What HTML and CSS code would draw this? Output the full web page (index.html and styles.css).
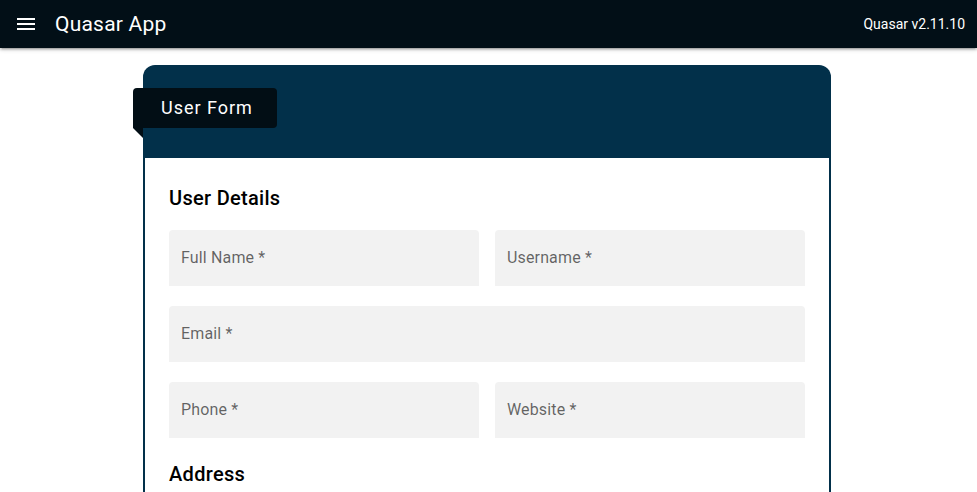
FILE: index.html
```html
<!DOCTYPE html>
<html>
<head>
<meta charset="utf-8">
<link rel="stylesheet" href="styles.css">
</head>
<body>
<header class="toolbar">
  <button class="menu-btn" aria-label="Menu">
    <svg width="24" height="24" viewBox="0 0 24 24"><path fill="#fff" d="M3 18h18v-2H3v2zm0-5h18v-2H3v2zm0-7v2h18V6H3z"/></svg>
  </button>
  <div class="title">Quasar App</div>
  <div class="version">Quasar v2.11.10</div>
</header>
<main class="page">
  <section class="card">
    <div class="card-head">
      <div class="ribbon">User Form</div>
    </div>
    <div class="card-body">
      <h2 class="section-title">User Details</h2>
      <div class="row">
        <div class="field"><span class="label">Full Name *</span></div>
        <div class="field"><span class="label">Username *</span></div>
      </div>
      <div class="row">
        <div class="field"><span class="label">Email *</span></div>
      </div>
      <div class="row">
        <div class="field"><span class="label">Phone *</span></div>
        <div class="field"><span class="label">Website *</span></div>
      </div>
      <h2 class="section-title address">Address</h2>
    </div>
  </section>
</main>
</body>
</html>
```

FILE: styles.css
```css
* { box-sizing: border-box; }
html, body { margin: 0; padding: 0; }
body {
  font-family: Roboto, "Noto Sans", sans-serif;
  background: #fff;
  color: #000;
  height: 492px;
  overflow: hidden;
}
.toolbar {
  height: 48px;
  background: #020f17;
  color: #fff;
  display: flex;
  align-items: center;
  padding: 0 12px 0 14px;
  box-shadow: 0 1px 5px rgba(0,0,0,0.2), 0 2px 2px rgba(0,0,0,0.14), 0 3px 1px -2px rgba(0,0,0,0.12);
  position: relative;
  z-index: 2;
}
.menu-btn {
  background: none;
  border: 0;
  padding: 0;
  width: 24px;
  height: 24px;
  display: flex;
}
.title {
  font-size: 21px;
  letter-spacing: 0.01em;
  margin-left: 17px;
  flex: 1;
}
.version {
  font-size: 14px;
}
.page {
  padding: 17px 0 0 143px;
}
.card {
  width: 688px;
  border-radius: 12px 12px 0 0;
  background: #02304a;
}
.card-head {
  height: 93px;
  padding-top: 23px;
  position: relative;
}
.ribbon {
  position: relative;
  margin-left: -10px;
  width: 144px;
  height: 40px;
  background: #020e15;
  color: #fff;
  font-size: 18px;
  letter-spacing: 0.055em;
  border-radius: 4px 4px 4px 0;
  padding-left: 28px;
  line-height: 40px;
}
.ribbon::after {
  content: "";
  position: absolute;
  left: 0;
  top: 40px;
  border-top: 10px solid #020e15;
  border-left: 10px solid transparent;
}
.card-body {
  background: #fff;
  margin: 0 2px;
  padding: 24px 24px 40px;
  height: 340px;
}
.section-title {
  margin: 0;
  font-size: 20px;
  font-weight: 500;
  line-height: 32px;
  letter-spacing: 0.015em;
}
.row {
  display: flex;
  gap: 16px;
  margin-top: 20px;
}
.row:first-of-type { margin-top: 16px; }
.field {
  flex: 1;
  height: 56px;
  background: #f2f2f2;
  border-radius: 4px 4px 0 0;
  display: flex;
  align-items: center;
  padding: 0 0 2px 12px;
}
.label {
  font-size: 16px;
  color: rgba(0,0,0,0.6);
  letter-spacing: 0.00937em;
}
.address { margin-top: 20px; }
```
